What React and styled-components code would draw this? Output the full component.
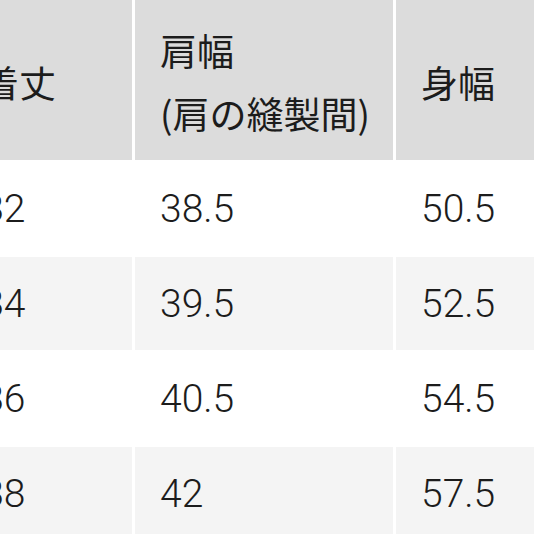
import React from 'react'
import styled, { createGlobalStyle } from 'styled-components'

const GlobalStyle = createGlobalStyle`
  html, body {
    margin: 0;
    padding: 0;
    background: #ffffff;
  }
  body {
    font-family: "Noto Sans CJK JP", "Noto Sans", sans-serif;
    color: #1c1c1c;
  }
`

const Viewport = styled.div`
  width: 534px;
  height: 534px;
  overflow: hidden;
  background: #ffffff;
`

const Table = styled.div`
  display: grid;
  grid-template-columns: 175px 258px 200px;
  grid-template-rows: 160px repeat(4, 93px);
  column-gap: 3px;
  row-gap: 2px;
  margin-left: -43px;
  width: 639px;
`

const HeadCell = styled.div`
  background: #dcdcdc;
  display: flex;
  align-items: center;
  padding-left: 25px;
  padding-top: 4px;
  font-size: 37px;
  line-height: 63px;
  font-weight: 400;
  white-space: nowrap;
`

const Cell = styled.div`
  background: ${(p) => (p.$striped ? '#f4f4f4' : '#ffffff')};
  display: flex;
  align-items: center;
  padding-left: 25px;
  font-family: Roboto, "Noto Sans CJK JP", sans-serif;
  font-size: 39px;
  font-weight: 300;
`

const headers = [
  ['着丈'],
  ['肩幅', '(肩の縫製間)'],
  ['身幅'],
]

const rows = [
  ['82', '38.5', '50.5'],
  ['84', '39.5', '52.5'],
  ['86', '40.5', '54.5'],
  ['88', '42', '57.5'],
]

export default function App() {
  return (
    <Viewport>
      <GlobalStyle />
      <Table>
        {headers.map((lines, i) => (
          <HeadCell key={i}>
            <div>
              {lines.map((l) => (
                <div key={l}>{l}</div>
              ))}
            </div>
          </HeadCell>
        ))}
        {rows.map((row, r) =>
          row.map((v, c) => (
            <Cell key={`${r}-${c}`} $striped={r % 2 === 1}>
              {v}
            </Cell>
          ))
        )}
      </Table>
    </Viewport>
  )
}
